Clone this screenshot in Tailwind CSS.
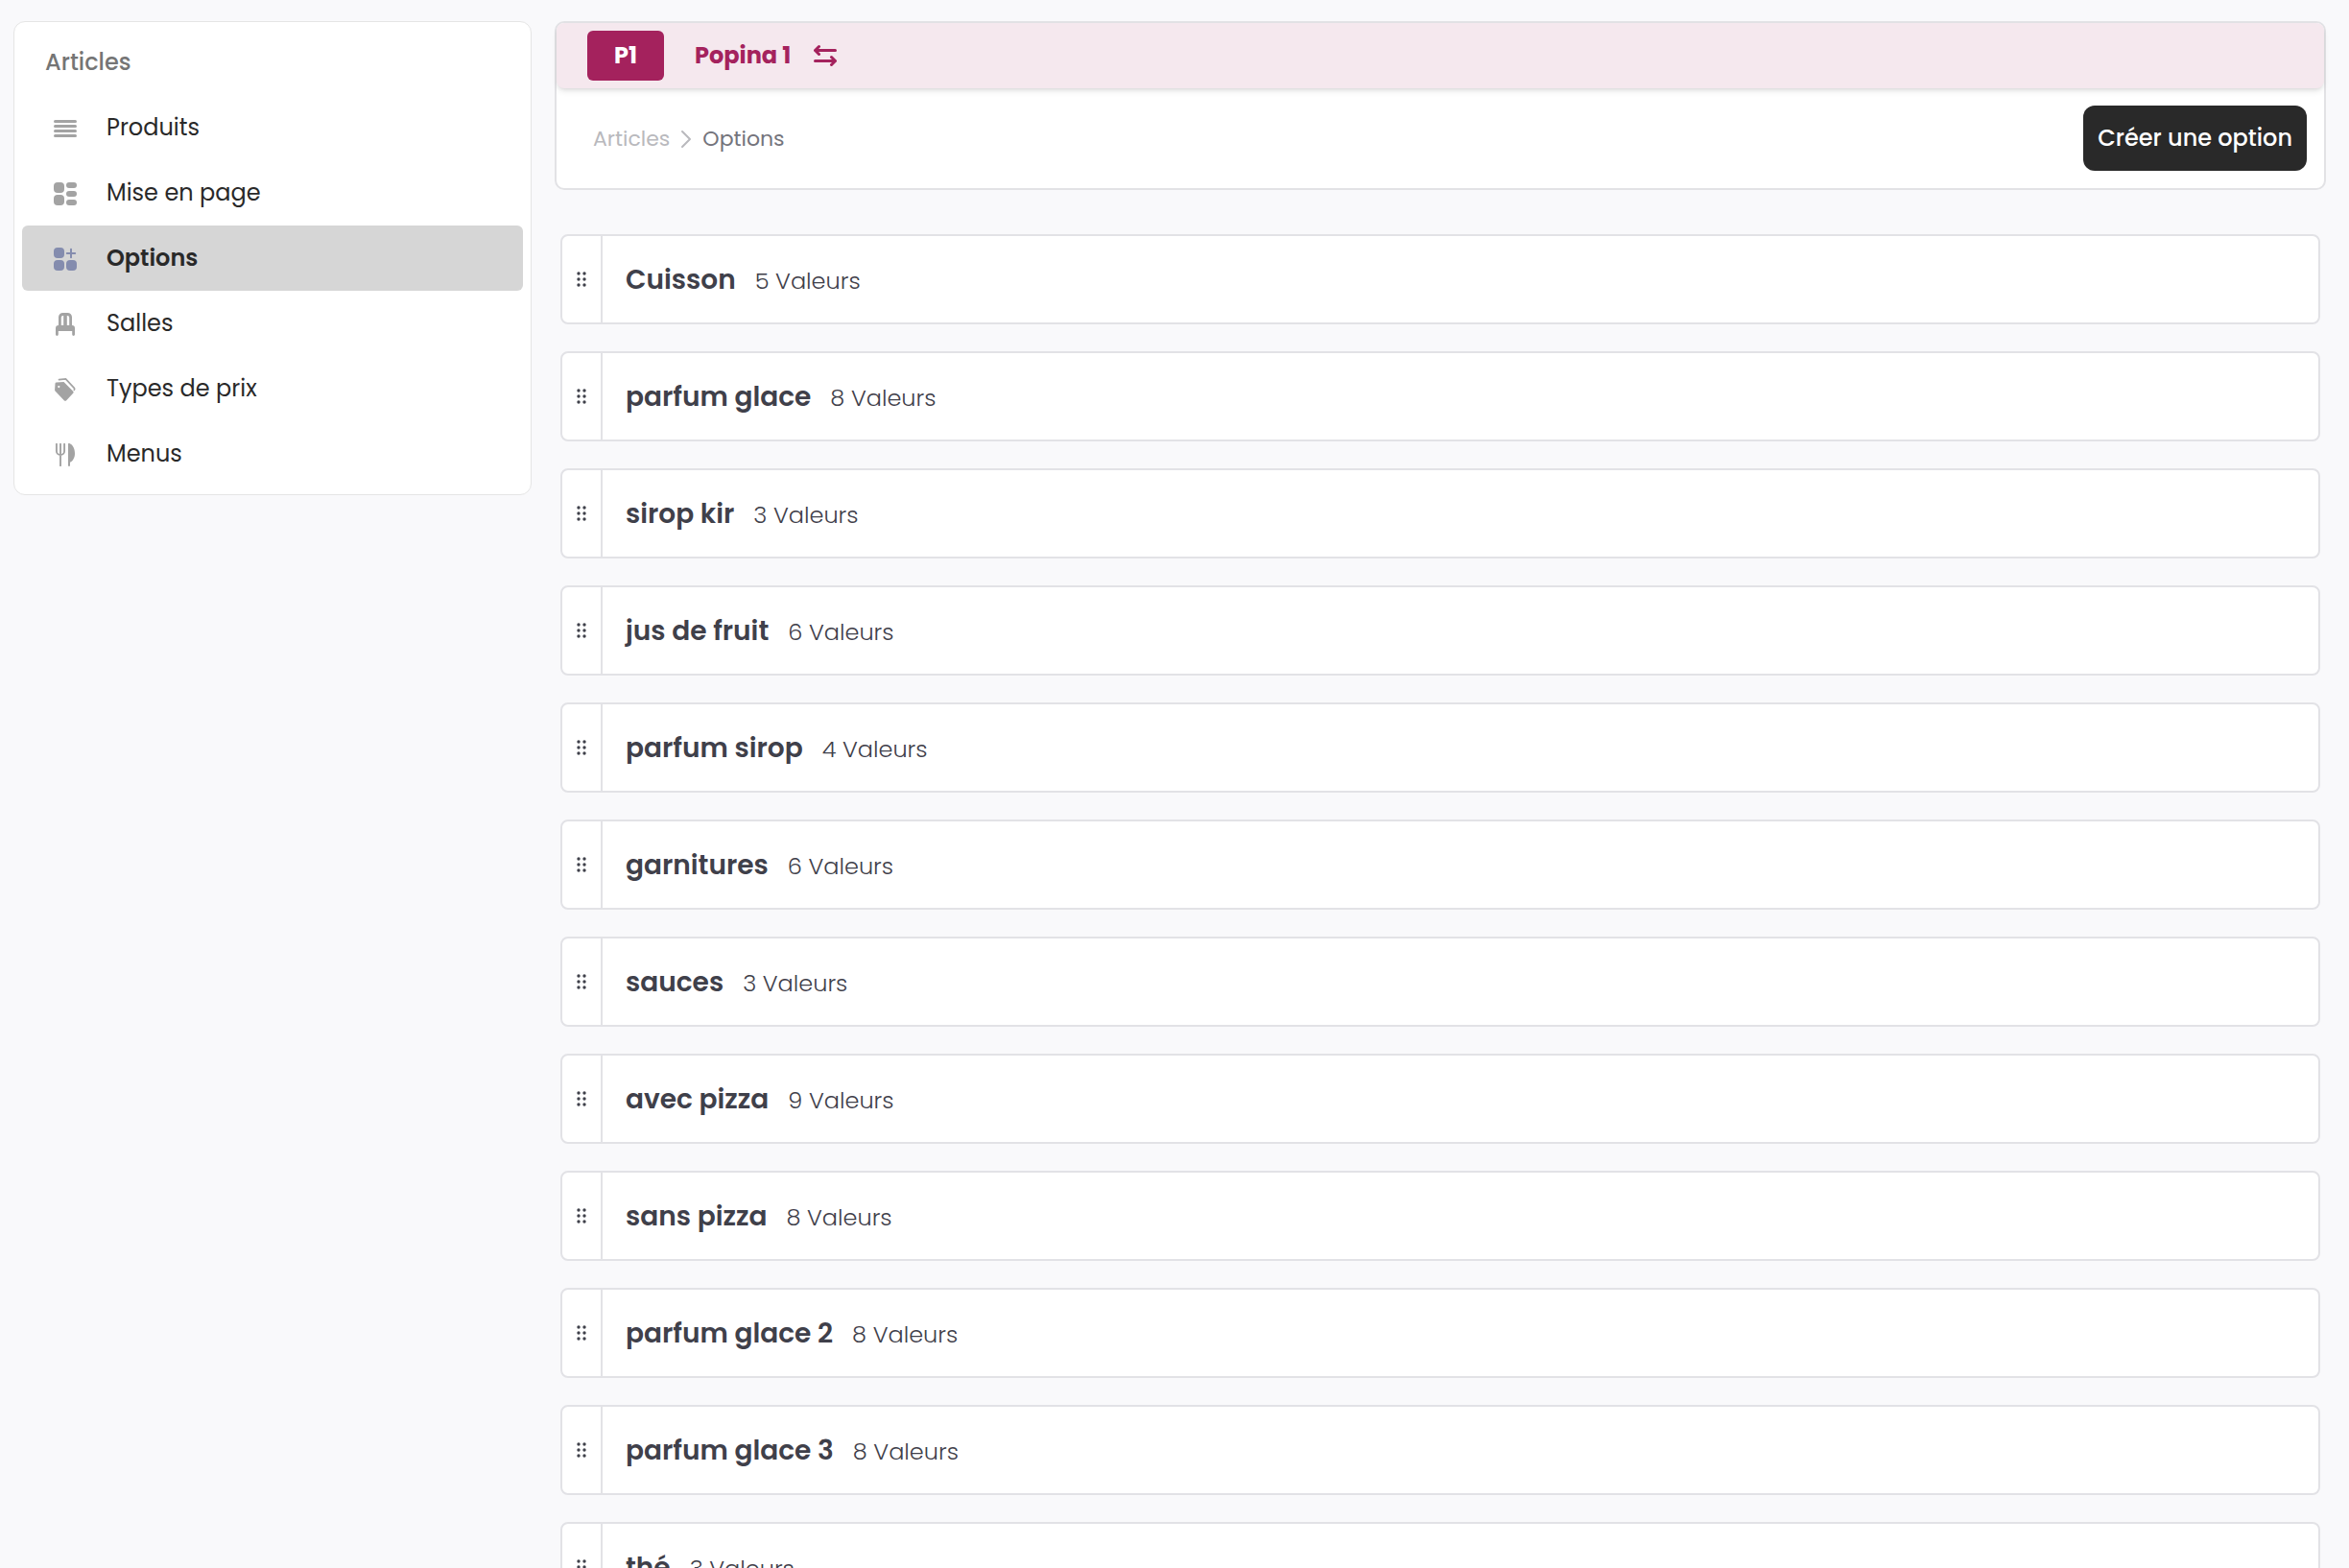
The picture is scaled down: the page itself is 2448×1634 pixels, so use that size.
<!DOCTYPE html>
<html lang="fr">
    <head>
        <meta charset="UTF-8" />
        <meta name="viewport" content="width=device-width, initial-scale=1.0" />
        <title>Options</title>
        <script src="https://cdn.jsdelivr.net/npm/@tailwindcss/browser@4"></script>
    </head>
    <body class="bg-[#f9f9fb] text-[#292929] font-['Poppins','Inter',sans-serif] min-h-screen">
        <div class="flex items-start gap-6 pt-[22px] pl-[14px] pr-6">

            <!-- Sidebar -->
            <nav aria-label="Articles" class="w-[540px] shrink-0 bg-white border border-[#e5e5e5] rounded-xl p-2 text-2xl">
                <h2 class="h-[68px] pl-6 flex items-center font-medium text-[#757575]">Articles</h2>
                <a href="#" class="flex items-center gap-[31px] h-[68px] pl-[33px] rounded-md hover:bg-gray-100">
                    <svg class="size-6 mt-0.5 shrink-0 fill-[#a3a3a3]" viewBox="0 0 24 24">
                        <rect y="3" width="24" height="3" rx="1.5" />
                        <rect y="8" width="24" height="3" rx="1.5" />
                        <rect y="13" width="24" height="3" rx="1.5" />
                        <rect y="18" width="24" height="3" rx="1.5" />
                    </svg>
                    Produits
                </a>
                <a href="#" class="flex items-center gap-[31px] h-[68px] pl-[33px] rounded-md hover:bg-gray-100">
                    <svg class="size-6 mt-0.5 shrink-0 fill-[#a3a3a3]" viewBox="0 0 24 24">
                        <rect width="11" height="11" rx="4" />
                        <rect y="13" width="11" height="11" rx="4" />
                        <rect x="13" width="11" height="6" rx="3" />
                        <rect x="13" y="9" width="11" height="6" rx="3" />
                        <rect x="13" y="18" width="11" height="6" rx="3" />
                    </svg>
                    Mise en page
                </a>
                <a href="#" aria-current="page" class="flex items-center gap-[31px] h-[68px] pl-[33px] rounded-md bg-[#d6d6d6] font-semibold">
                    <svg class="size-6 mt-0.5 shrink-0 fill-[#848cae]" viewBox="0 0 24 24">
                        <rect width="11" height="11" rx="4" />
                        <rect y="13" width="11" height="11" rx="4" />
                        <rect x="13" y="13" width="11" height="11" rx="4" />
                        <path d="M18 1.8v8.4M13.8 6h8.4" stroke="#848cae" stroke-width="2" stroke-linecap="round" />
                    </svg>
                    Options
                </a>
                <a href="#" class="flex items-center gap-[31px] h-[68px] pl-[33px] rounded-md hover:bg-gray-100">
                    <svg class="size-6 mt-0.5 shrink-0 fill-[#a3a3a3]" viewBox="0 0 24 24">
                        <path fill-rule="evenodd" d="M9.5 0h5A4.5 4.5 0 0 1 19 4.500V13a3 3 0 0 1 3 3v6.500a1.400 1.400 0 0 1-2.800 0V19H4.800v3.500a1.400 1.400 0 0 1-2.800 0V16a3 3 0 0 1 3-3V4.500A4.500 4.500 0 0 1 9.500 0ZM7.800 4.800V13h2.400V3A2 2 0 0 0 7.800 4.800ZM13.800 3v10h2.400V4.800A2 2 0 0 0 13.800 3Z" />
                    </svg>
                    Salles
                </a>
                <a href="#" class="flex items-center gap-[31px] h-[68px] pl-[33px] rounded-md hover:bg-gray-100">
                    <svg class="size-6 mt-0.5 shrink-0 fill-[#a3a3a3]" viewBox="0 0 24 24">
                        <path fill-rule="evenodd" d="M2.800 4.600 10.500 4 20.200 13.800a1.500 1.500 0 0 1 0 2L13 23.400a1.500 1.500 0 0 1-2 0L1.500 13.500a1.500 1.500 0 0 1-.4-1.200L1.500 5.800A1.300 1.300 0 0 1 2.800 4.600ZM5.300 8a1 1 0 1 0 .01 0Z" />
                        <path d="M5.500 1.700 12.500 1l8.800 9.300a1.500 1.500 0 0 1 0 2" fill="none" stroke="#a3a3a3" stroke-width="1.700" stroke-linecap="round" />
                    </svg>
                    Types de prix
                </a>
                <a href="#" class="flex items-center gap-[31px] h-[68px] pl-[33px] rounded-md hover:bg-gray-100">
                    <svg class="size-6 mt-0.5 shrink-0 fill-[#a3a3a3]" viewBox="0 0 24 24">
                        <path d="M2.900.8v7.200a4.100 4.100 0 0 0 8.200 0V.8M7 .8v22.400" fill="none" stroke="#a3a3a3" stroke-width="1.900" stroke-linecap="round" />
                        <path d="M15 1a1 1 0 0 1 1.400-.9C20 1.600 22 5.800 22 10.500c0 4.500-2 8-5 9.300V23a1 1 0 0 1-2 0Z" />
                    </svg>
                    Menus
                </a>
            </nav>

            <main class="flex-1 min-w-0">

                <!-- Header -->
                <header class="bg-white border-2 border-[#e2e2e5] rounded-[10px]">
                    <div class="flex items-center h-[68px] pl-8 gap-8 rounded-lg bg-[#f5e8ee] text-[#a4225d] font-bold text-2xl shadow-md">
                        <span class="w-20 h-[52px] rounded-md bg-[#a4225d] text-white flex items-center justify-center">P1</span>
                        <button type="button" class="flex items-center gap-6 cursor-pointer">
                            Popina 1
                            <svg class="size-6 shrink-0" viewBox="0 0 24 24" fill="none" stroke="currentColor" stroke-width="3" stroke-linecap="round" stroke-linejoin="round">
                                <path d="M22.500 6.500h-21M5.500 2.500l-4 4 4 4M1.500 17.500h21M18.500 13.500l4 4-4 4" />
                            </svg>
                        </button>
                    </div>
                    <div class="flex items-center justify-between py-[18px] pl-[38px] pr-[18px]">
                        <nav aria-label="Fil d'Ariane" class="flex items-center gap-[11px] text-[22px]">
                            <a href="#" class="text-[#b9b9bd]">Articles</a>
                            <svg class="w-3 h-5 mt-0.5" viewBox="0 0 12 20" fill="none" stroke="#b9b9bd" stroke-width="2" stroke-linecap="round" stroke-linejoin="round">
                                <path d="M2 2l8 8-8 8" />
                            </svg>
                            <span class="text-[#74747c]">Options</span>
                        </nav>
                        <button type="button" class="h-[68px] px-[15px] rounded-xl bg-[#292929] text-white text-2xl font-medium cursor-pointer">Créer une option</button>
                    </div>
                </header>

                <!-- Options list -->
                <ul id="optionList" class="flex flex-col gap-7 mt-[46px] px-1.5"></ul>
            </main>
        </div>

        <script>
            const options = [
                { name: "Cuisson", count: 5 },
                { name: "parfum glace", count: 8 },
                { name: "sirop kir", count: 3 },
                { name: "jus de fruit", count: 6 },
                { name: "parfum sirop", count: 4 },
                { name: "garnitures", count: 6 },
                { name: "sauces", count: 3 },
                { name: "avec pizza", count: 9 },
                { name: "sans pizza", count: 8 },
                { name: "parfum glace 2", count: 8 },
                { name: "parfum glace 3", count: 8 },
                { name: "thé", count: 3 },
            ];

            document.getElementById("optionList").innerHTML = options.map(option => `
                <li class="flex h-[94px] bg-white border-2 border-[#e2e2e6] rounded-lg text-[#3f404a]">
                    <button type="button" aria-label="Déplacer ${option.name}" class="w-[42px] border-r-2 border-[#e2e2e6] flex items-center justify-center cursor-grab">
                        <svg class="w-3 h-4" viewBox="0 0 12 16" fill="currentColor">
                            <circle cx="3" cy="2" r="1.700" /><circle cx="9" cy="2" r="1.700" />
                            <circle cx="3" cy="8" r="1.700" /><circle cx="9" cy="8" r="1.700" />
                            <circle cx="3" cy="14" r="1.700" /><circle cx="9" cy="14" r="1.700" />
                        </svg>
                    </button>
                    <div class="flex items-center pl-6 pt-0.5">
                        <p class="flex items-baseline gap-5">
                            <span class="text-[28px] font-semibold">${option.name}</span>
                            <span class="text-2xl font-light">${option.count} Valeurs</span>
                        </p>
                    </div>
                </li>
            `).join("");
        </script>
    </body>
</html>
